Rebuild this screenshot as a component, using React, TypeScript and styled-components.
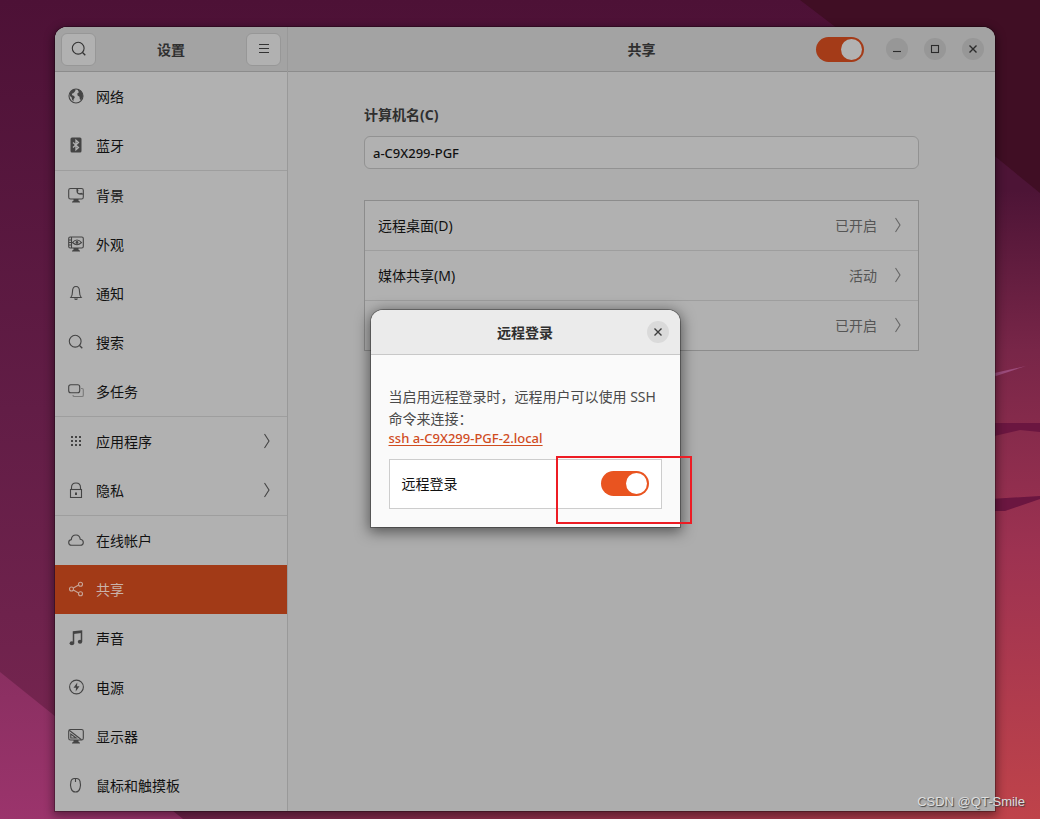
import React from 'react';
import styled, { createGlobalStyle, css } from 'styled-components';

const GlobalStyle = createGlobalStyle`
  * { box-sizing: border-box; }
  body {
    margin: 0;
    background: #4a1033;
    font-family: "Noto Sans", "Noto Sans CJK SC", sans-serif;
    font-size: 14px;
    line-height: 22px;
    color: #111;
  }
  button, input { font: inherit; color: inherit; }
`;

const Desktop = styled.div`
  position: relative;
  min-height: 100vh;
  padding: 27px 45px 8px 55px;
  display: flex;
  overflow: hidden;
`;

const WallpaperSvg = styled.svg`
  position: absolute;
  inset: 0;
  width: 100%;
  height: 100%;
`;

const Window = styled.div`
  position: relative;
  flex: 1;
  display: flex;
  min-width: 0;
  border-radius: 12px 12px 0 0;
  background: #adadad;
  box-shadow: 0 0 0 1px rgba(0, 0, 0, 0.25), 0 3px 10px 2px rgba(0, 0, 0, 0.4);
`;

const Sidebar = styled.aside`
  flex: 0 0 233px;
  display: flex;
  flex-direction: column;
  border-right: 1px solid #999;
  background: #b1b1b1;
  border-radius: 12px 0 0 0;
`;

const HeaderBar = styled.header<{ $side?: boolean }>`
  height: 45px;
  display: flex;
  align-items: center;
  justify-content: space-between;
  padding: ${p => (p.$side ? '0 6px' : '0 11px')};
  border-bottom: 1px solid #8c8c8c;
  background: #a3a3a3;
  border-radius: ${p => (p.$side ? '12px 0 0 0' : '0 12px 0 0')};
`;

const Title = styled.h1`
  margin: 0;
  padding-top: 2px;
  font-size: 14px;
  line-height: 22px;
  font-weight: 700;
  color: #2f2f2f;
`;

const HeaderButton = styled.button`
  width: 35px;
  height: 33px;
  display: grid;
  place-items: center;
  padding: 0;
  border: 1px solid #979797;
  border-radius: 6px;
  background: #b1b1b1;
  color: #333;
`;

const NavGroup = styled.ul`
  list-style: none;
  margin: 0;
  padding: 0;
  & + & { border-top: 1px solid #9e9e9e; }
`;

const NavLink = styled.a<{ $active?: boolean }>`
  height: 49px;
  display: flex;
  align-items: center;
  gap: 12px;
  padding: 1px 15px 0 13px;
  color: #111;
  text-decoration: none;
  svg { color: #444; margin-bottom: 3px; flex: none; }
  ${p => p.$active && css`
    background: #a23a17;
    color: #c9b2aa;
    svg { color: #c9a598; }
  `}
`;

const NavText = styled.span`
  flex: 1;
`;

const Main = styled.main`
  flex: 1;
  min-width: 0;
  display: flex;
  flex-direction: column;
`;

const HeaderSide = styled.div<{ $end?: boolean }>`
  flex: 1;
  display: flex;
  align-items: center;
  justify-content: ${p => (p.$end ? 'flex-end' : 'flex-start')};
  gap: 16px;
`;

const Switch = styled.input<{ $dim?: boolean }>`
  appearance: none;
  flex: none;
  width: 48px;
  height: 25px;
  margin: 0;
  padding: 2px;
  border-radius: 13px;
  background: ${p => (p.$dim ? '#a43b18' : '#e95420')};
  display: flex;
  justify-content: flex-end;
  &::before {
    content: '';
    width: 21px;
    height: 21px;
    border-radius: 50%;
    background: ${p => (p.$dim ? '#b2b2b2' : '#fff')};
  }
  &:not(:checked) {
    justify-content: flex-start;
    background: #9a9a9a;
  }
`;

const WindowControls = styled.div`
  display: flex;
  gap: 16px;
  margin-left: 6px;
`;

const RoundButton = styled.button<{ $dim?: boolean }>`
  width: 22px;
  height: 22px;
  display: grid;
  place-items: center;
  padding: 0;
  border: 0;
  border-radius: 50%;
  background: ${p => (p.$dim ? '#979797' : '#dadada')};
  color: ${p => (p.$dim ? '#2b2b2b' : '#3d3d3d')};
`;

const Content = styled.div`
  padding: 32px 76px;
  display: flex;
  flex-direction: column;
`;

const FieldLabel = styled.label`
  font-weight: 700;
  color: #2f2f2f;
`;

const TextField = styled.input`
  width: 100%;
  height: 33px;
  margin: 10px 0 31px;
  padding: 0 8px;
  border: 1px solid #929292;
  border-radius: 6px;
  background: #b1b1b1;
  font-size: 13px;
  font-weight: 500;
`;

const ServiceList = styled.ul`
  list-style: none;
  margin: 0;
  padding: 0;
  border: 1px solid #8c8c8c;
  background: #b1b1b1;
`;

const ServiceRow = styled.li`
  & + & { border-top: 1px solid #9e9e9e; }
`;

const ServiceButton = styled.button`
  width: 100%;
  height: 49px;
  display: flex;
  align-items: center;
  padding: 1px 15px 0 13px;
  border: 0;
  background: transparent;
  text-align: left;
  svg { color: #666; margin: 0 0 3px 16px; }
`;

const ServiceStatus = styled.span`
  color: #555;
`;

const ModalLayer = styled.div`
  position: absolute;
  inset: 0;
  padding-bottom: 2px;
  display: flex;
  align-items: center;
  justify-content: center;
`;

const Dialog = styled.section`
  position: relative;
  width: 309px;
  background: #fafafa;
  border-radius: 12px 12px 0 0;
  box-shadow: 0 0 0 1px rgba(0, 0, 0, 0.3), 0 3px 14px 2px rgba(0, 0, 0, 0.5);
`;

const DialogHeader = styled.header`
  height: 45px;
  display: grid;
  grid-template-columns: 1fr auto 1fr;
  align-items: center;
  padding: 0 11px;
  border-bottom: 1px solid #c8c8c8;
  border-radius: 12px 12px 0 0;
  background: #ebebeb;
  & > ${RoundButton} { grid-column: 3; justify-self: end; }
  & > ${Title} { grid-column: 2; }
`;

const DialogBody = styled.div`
  padding: 31px 18px 18px;
`;

const Hint = styled.p`
  margin: 0 0 13px;
  color: #4a4a4a;
`;

const CommandLink = styled.a`
  display: block;
  width: max-content;
  font-size: 13px;
  font-weight: 500;
  line-height: 16px;
  color: #d04c1e;
  text-decoration: underline;
  text-underline-offset: 2px;
`;

const OptionRow = styled.div`
  height: 50px;
  display: flex;
  align-items: center;
  justify-content: space-between;
  padding: 0 12px;
  border: 1px solid #cdcdcd;
  background: #fff;
`;

const Highlight = styled.div`
  position: absolute;
  right: -12px;
  bottom: 3px;
  width: 136px;
  height: 68px;
  border: 2px solid #ed1c24;
  pointer-events: none;
`;

const Watermark = styled.span`
  position: absolute;
  right: 15px;
  bottom: 6px;
  font-family: "Liberation Sans", sans-serif;
  font-size: 13px;
  color: #dedede;
  text-shadow: 1px 1px 1px #444;
`;

const ICONS: Record<string, React.ReactNode> = {
  globe: <>
    <circle cx="8" cy="8" r="7" />
    <path fill="currentColor" stroke="none" d="M1.500 5.500 4 2l3-1 .5 1.500L6.500 4 5.200 5.200 3.800 5.800l.4 1.400 2 .8.600 1.500L5.600 11.200 5.400 13.500 4 11.500 3.700 9.500 2 8zM9.500 1.500l3.200 1.200 2 3.300.2 2.500-1.900 3.500-1.200-.8-.3-2.400L9.600 7.600 9.300 5.500l1.600-1.200z" />
  </>,
  bluetooth: <>
    <rect x="2.500" y="0.500" width="11" height="15" rx="1.500" fill="currentColor" stroke="none" />
    <path stroke="#b1b1b1" strokeWidth="1.300" d="m5 5.500 5.500 5L8 12.800V3.200l2.500 2.300-5.500 5" />
  </>,
  background: <>
    <rect x="0.700" y="1.500" width="14.600" height="10.500" rx="1.800" />
    <path fill="currentColor" stroke="none" d="M5.500 12h5v1.700l1.500 1v.8H4v-.8l1.500-1z" />
    <path d="M9 1.500v2.300q0 3.200 3.200 3.200h3" />
    <path fill="currentColor" stroke="none" d="M9 1.500 10.500 3 9.800 5.500l1.200 1 2.500-.8 1.500 1.500H11q-2-.5-2-3z" />
  </>,
  appearance: <>
    <rect x="0.700" y="1" width="14.600" height="11" rx="1.500" />
    <path fill="currentColor" stroke="none" d="M5.500 12h5v1.700l1.500 1v.8H4v-.8l1.500-1z" />
    <path d="M3.500 1v11M1 4h2.500M1 6.500h2.500M1 9h2.500M4.500 6.500Q9 1.500 13.500 6.500 9 11 4.500 6.500z" />
    <circle cx="9" cy="6.500" r="1.400" fill="currentColor" stroke="none" />
  </>,
  bell: <>
    <path d="M2.800 12.500Q4.500 10.500 4.500 6.500 4.500 1.500 8 1.500t3.500 5q0 4 1.700 6z" />
    <path fill="currentColor" stroke="none" d="M6 13.500h4Q9.500 15 8 15t-2-1.500z" />
  </>,
  search: <><circle cx="7.200" cy="7.200" r="5.900" /><path strokeWidth="1.300" d="m11.500 11.500 2.800 2.800" /></>,
  multitask: <>
    <rect x="0.700" y="1.700" width="11" height="8" rx="2" />
    <path opacity=".5" d="M13 5.500h1q1.300 0 1.300 1.300v5.400q0 1.300-1.300 1.300H6.300Q5 13.500 5 12.200V12" />
  </>,
  apps: <g fill="currentColor" stroke="none">
    {[3, 7, 11].map(y => [3, 7, 11].map(x => <rect key={`${x}-${y}`} x={x} y={y} width="2" height="2" />))}
  </g>,
  lock: <>
    <rect x="2.500" y="7.500" width="11" height="8" />
    <path d="M3.500 7.500V5.500q0-4.500 4.500-4.500t4.500 4.500v2" />
    <rect x="7" y="10.500" width="2" height="2.500" fill="currentColor" stroke="none" />
  </>,
  cloud: <path d="M3.600 13.300Q.7 13.300.7 10.500.7 8 3.300 7.600 3.700 3 8 3q3.700 0 4.300 4.300 3 .4 3 3.200 0 2.800-3 2.800z" />,
  share: <>
    <circle cx="3.500" cy="8" r="2" /><circle cx="12.500" cy="3.200" r="2" /><circle cx="12.500" cy="12.800" r="2" />
    <path d="m5.300 7 5.400-2.900M5.300 9l5.400 2.900" />
  </>,
  music: <>
    <path strokeWidth="1.500" d="M5.500 13V2l8-1v10.500" />
    <path strokeWidth="2" d="m5.500 3 8-1" />
    <ellipse cx="3.900" cy="13.200" rx="2.300" ry="2" fill="currentColor" stroke="none" />
    <ellipse cx="12" cy="11.800" rx="2.200" ry="2" fill="currentColor" stroke="none" />
  </>,
  power: <>
    <circle cx="8.500" cy="8" r="6.900" />
    <path fill="currentColor" stroke="none" d="M9.300 3.500 5.500 8.800H8L7.700 12.500 11.500 7.300H9z" />
  </>,
  display: <>
    <rect x="0.700" y="1.500" width="14.600" height="10.500" rx="1.800" />
    <path fill="currentColor" stroke="none" d="M5.500 12h5v1.700l1.500 1v.8H4v-.8l1.500-1z" />
    <path d="m1.200 2.300 12.300 9.400" />
    <path d="M2.800 6v4h5.400z" />
  </>,
  mouse: <path d="M7.500 5V1.500Q3.500 1 3 4.500 2 8 3 11q1 4 4.500 4t4.500-4q1-3 0-6.500-.5-3.500-4.500-3" />,
  menu: <path d="M3 3.500h10M3 7.500h10M3 11.500h10" />,
  minimize: <path d="M4 10.500h8" />,
  maximize: <rect x="4.500" y="4.500" width="7" height="7" />,
  close: <path strokeWidth="1.400" d="m4.500 4.500 7 7m0-7-7 7" />,
};

const Icon = ({ name }: { name: string }) => (
  <svg width="16" height="16" viewBox="0 0 16 16" fill="none" stroke="currentColor" strokeWidth="1.100" aria-hidden="true">
    {ICONS[name]}
  </svg>
);

const Chevron = () => (
  <svg width="10" height="16" viewBox="0 0 10 16" fill="none" stroke="currentColor" strokeWidth="1.100" aria-hidden="true">
    <path d="m2.500 1 4.500 7-4.500 7" />
  </svg>
);

const Wallpaper = () => (
  <WallpaperSvg viewBox="0 0 1040 819" preserveAspectRatio="none" aria-hidden="true">
    <defs>
      <linearGradient id="base" x1="0" y1="0" x2="0" y2="1">
        <stop offset="0" stopColor="#4d1136" />
        <stop offset="0.500" stopColor="#621d46" />
        <stop offset="1" stopColor="#7a2752" />
      </linearGradient>
      <linearGradient id="right" x1="0" y1="0" x2="0" y2="1">
        <stop offset="0.060" stopColor="#4d1436" />
        <stop offset="0.300" stopColor="#782648" />
        <stop offset="0.600" stopColor="#9d3251" />
        <stop offset="1" stopColor="#bf434a" />
      </linearGradient>
      <linearGradient id="corner" x1="0" y1="0" x2="0" y2="1">
        <stop offset="0" stopColor="#8a2f61" />
        <stop offset="1" stopColor="#9b346c" />
      </linearGradient>
      <linearGradient id="bottom" x1="0" y1="0" x2="1" y2="0">
        <stop offset="0" stopColor="#6f234b" />
        <stop offset="1" stopColor="#bb414b" />
      </linearGradient>
    </defs>
    <path fill="url(#base)" d="M0 0h1040v819H0z" />
    <path fill="url(#bottom)" d="M170 800h870v19H170z" />
    <path fill="url(#right)" d="M980 150h60v669h-60z" />
    <path fill="#400e24" d="M800 0h240v193L850 38z" />
    <path fill="url(#corner)" d="M0 672 183 819H0z" />
    <path fill="#9c4c7c" d="m990 374 36-8-30 10z" />
    <path fill="#6b1640" d="M990 423h50v9l-20-2-30 7zM990 499l50-3v3l-35 12h-15z" />
  </WallpaperSvg>
);

interface NavItem { icon: string; text: string; more?: boolean; active?: boolean }

const NAV: NavItem[][] = [
  [{ icon: 'globe', text: '网络' }, { icon: 'bluetooth', text: '蓝牙' }],
  [
    { icon: 'background', text: '背景' },
    { icon: 'appearance', text: '外观' },
    { icon: 'bell', text: '通知' },
    { icon: 'search', text: '搜索' },
    { icon: 'multitask', text: '多任务' },
  ],
  [{ icon: 'apps', text: '应用程序', more: true }, { icon: 'lock', text: '隐私', more: true }],
  [
    { icon: 'cloud', text: '在线帐户' },
    { icon: 'share', text: '共享', active: true },
    { icon: 'music', text: '声音' },
    { icon: 'power', text: '电源' },
    { icon: 'display', text: '显示器' },
    { icon: 'mouse', text: '鼠标和触摸板' },
  ],
];

const SERVICES = [
  { name: '远程桌面(D)', status: '已开启' },
  { name: '媒体共享(M)', status: '活动' },
  { name: '', status: '已开启' },
];

export default function App() {
  return (
    <>
      <GlobalStyle />
      <Desktop>
        <Wallpaper />
        <Window>
          <Sidebar>
            <HeaderBar $side>
              <HeaderButton aria-label="搜索"><Icon name="search" /></HeaderButton>
              <Title>设置</Title>
              <HeaderButton aria-label="菜单"><Icon name="menu" /></HeaderButton>
            </HeaderBar>
            <nav>
              {NAV.map((group, i) => (
                <NavGroup key={i}>
                  {group.map(item => (
                    <li key={item.text}>
                      <NavLink href="#" $active={item.active}>
                        <Icon name={item.icon} />
                        <NavText>{item.text}</NavText>
                        {item.more && <Chevron />}
                      </NavLink>
                    </li>
                  ))}
                </NavGroup>
              ))}
            </nav>
          </Sidebar>
          <Main>
            <HeaderBar>
              <HeaderSide />
              <Title>共享</Title>
              <HeaderSide $end>
                <Switch type="checkbox" role="switch" defaultChecked $dim aria-label="共享" />
                <WindowControls>
                  <RoundButton $dim aria-label="最小化"><Icon name="minimize" /></RoundButton>
                  <RoundButton $dim aria-label="最大化"><Icon name="maximize" /></RoundButton>
                  <RoundButton $dim aria-label="关闭"><Icon name="close" /></RoundButton>
                </WindowControls>
              </HeaderSide>
            </HeaderBar>
            <Content>
              <FieldLabel htmlFor="host">计算机名(C)</FieldLabel>
              <TextField id="host" defaultValue="a-C9X299-PGF" />
              <ServiceList>
                {SERVICES.map((s, i) => (
                  <ServiceRow key={i}>
                    <ServiceButton>
                      <NavText>{s.name}</NavText>
                      <ServiceStatus>{s.status}</ServiceStatus>
                      <Chevron />
                    </ServiceButton>
                  </ServiceRow>
                ))}
              </ServiceList>
            </Content>
          </Main>
          <ModalLayer>
            <Dialog role="dialog" aria-labelledby="dialog-title">
              <DialogHeader>
                <Title as="h2" id="dialog-title">远程登录</Title>
                <RoundButton aria-label="关闭"><Icon name="close" /></RoundButton>
              </DialogHeader>
              <DialogBody>
                <Hint>
                  当启用远程登录时，远程用户可以使用 SSH 命令来连接：
                  <CommandLink href="#">ssh a-C9X299-PGF-2.local</CommandLink>
                </Hint>
                <OptionRow>
                  <label htmlFor="remote-login">远程登录</label>
                  <Switch id="remote-login" type="checkbox" role="switch" defaultChecked />
                </OptionRow>
              </DialogBody>
              <Highlight />
            </Dialog>
          </ModalLayer>
        </Window>
        <Watermark>CSDN @QT-Smile</Watermark>
      </Desktop>
    </>
  );
}
